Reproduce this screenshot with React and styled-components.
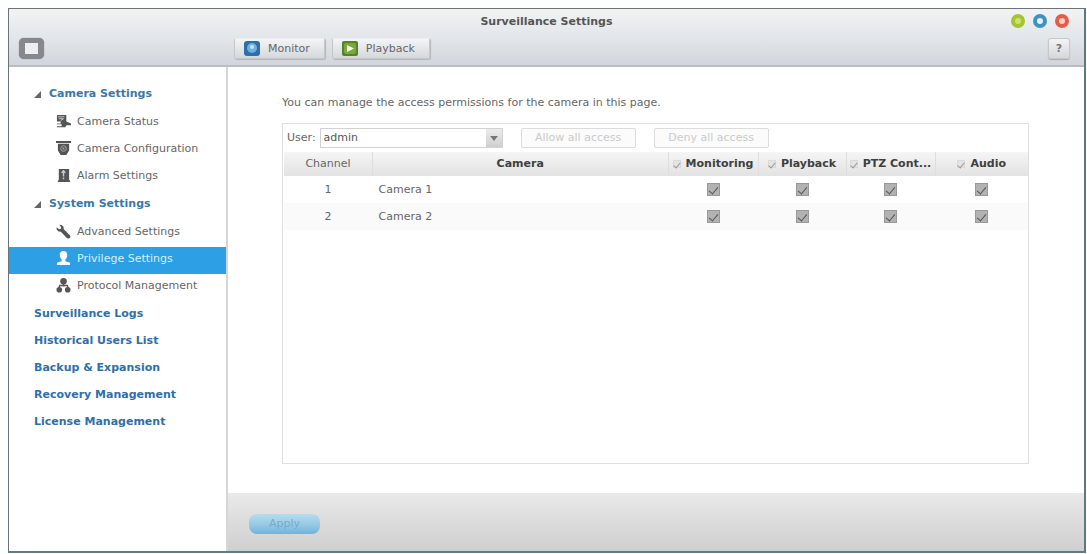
import React from 'react';
import styled, { createGlobalStyle } from 'styled-components';

const GlobalStyle = createGlobalStyle`
  * {
    box-sizing: border-box;
  }

  body {
    margin: 0;
    background: #fdfefe;
    color: #555;
    font: 11px/16px "DejaVu Sans", Verdana, sans-serif;
  }

  button, select, input {
    margin: 0;
    font: inherit;
    color: inherit;
  }
`;

const Page = styled.div`
  display: flex;
  flex-direction: column;
  min-height: 100vh;
  padding: 8px 1px 1px 8px;
`;

const Window = styled.div`
  flex: 1;
  display: flex;
  flex-direction: column;
  border: 1px solid #6b7379;
  border-right: 2px solid #5f7888;
  border-bottom: 2px solid #5c7c8d;
  background: #fff;
`;

const Header = styled.header`
  padding-bottom: 2px;
  border-bottom: 2px solid #bcbdbf;
  background: linear-gradient(#f1f3f3, #e3e6ea 50%, #d2d5db);
`;

const TitleBar = styled.div`
  display: grid;
  grid-template-columns: 1fr auto 1fr;
  align-items: center;
  height: 25px;
  padding: 0 15px;
`;

const Title = styled.h1`
  grid-column: 2;
  margin: 0;
  color: #555;
  font-size: 11px;
  font-weight: bold;
`;

const WindowControls = styled.div`
  display: flex;
  justify-content: flex-end;
  gap: 8px;
  padding-bottom: 2px;
`;

const Dot = styled.button`
  width: 14px;
  height: 14px;
  padding: 0;
  border: 4px solid ${props => props.$color};
  border-radius: 50%;
  background: ${props => props.$center};
`;

const Toolbar = styled.div`
  display: flex;
  align-items: center;
  gap: 7px;
  height: 29px;
  padding: 0 14px 0 10px;
`;

const MenuArea = styled.div`
  display: flex;
  width: 208px;
`;

const MenuButton = styled.button`
  width: 25px;
  height: 21px;
  padding: 0;
  border: 5px solid #85898f;
  border-left-width: 6px;
  border-right-width: 6px;
  border-radius: 5px;
  background: #eceef2;
  box-shadow: 0 0 1px #666a70;
`;

const ToolButton = styled.button`
  display: flex;
  align-items: center;
  gap: 8px;
  height: 21px;
  padding: 0 14px 0 9px;
  border: 1px solid #c3c7cb;
  border-top-color: #eceeef;
  border-radius: 2px;
  background: linear-gradient(#f3f4f5, #d5d9dd);
  color: #666;
  box-shadow: 1px 1px 1px #b4b7ba;

  svg {
    width: 16px;
    height: 15px;
  }
`;

const HelpButton = styled.button`
  width: 22px;
  height: 21px;
  margin-left: auto;
  padding: 0;
  border: 1px solid #c6c8cb;
  border-radius: 3px;
  background: linear-gradient(#f4f4f5, #d6d7d9);
  color: #777;
  font-weight: bold;
  box-shadow: 0 1px 1px #aaa;
`;

const Body = styled.div`
  flex: 1;
  display: flex;
`;

const Sidebar = styled.nav`
  flex: none;
  width: 219px;
  padding-top: 15px;
  border-right: 2px solid #d5d6d7;
`;

const Group = styled.section`
  padding-bottom: 1px;
`;

const GroupTitle = styled.h2`
  display: flex;
  align-items: center;
  gap: 8px;
  height: 28px;
  margin: 0;
  padding: 0 0 4px 25px;
  color: #3b78a8;
  font-size: 11px;
  font-weight: bold;

  svg {
    width: 7px;
    height: 7px;
  }
`;

const SubLink = styled.a`
  display: flex;
  align-items: center;
  gap: 6px;
  height: 27px;
  padding: 0 0 4px 47px;
  background: ${props => props.$active ? '#2c9fe5' : 'none'};
  color: ${props => props.$active ? '#d9efff' : '#666'};
  text-decoration: none;
  white-space: nowrap;

  svg {
    flex: none;
    width: 15px;
    height: 15px;
    color: ${props => props.$active ? '#fff' : '#555'};
  }
`;

const TopLink = styled.a`
  display: flex;
  align-items: center;
  height: 27px;
  padding: 0 0 4px 25px;
  color: #2f6fa8;
  font-weight: bold;
  text-decoration: none;
`;

const Main = styled.main`
  flex: 1;
  min-width: 0;
  display: flex;
  flex-direction: column;
`;

const Content = styled.div`
  flex: 1;
  display: flex;
  flex-direction: column;
  gap: 12px;
  padding: 28px 55px 29px 54px;
`;

const Intro = styled.p`
  margin: 0;
  color: #666;
`;

const Panel = styled.div`
  flex: 1;
  border: 1px solid #dfdfdf;
`;

const Filter = styled.div`
  display: flex;
  align-items: center;
  height: 28px;
  padding-left: 4px;
  color: #666;
`;

const SelectBox = styled.span`
  position: relative;
  width: 183px;
  height: 20px;
  margin: 0 18px 0 4px;
`;

const Select = styled.select`
  appearance: none;
  width: 100%;
  height: 20px;
  padding: 0 20px 0 3px;
  border: 1px solid #d2d2d2;
  border-radius: 0;
  background: #fff;
  color: #555;
`;

const Arrow = styled.svg`
  position: absolute;
  top: 1px;
  right: 1px;
  width: 16px;
  height: 18px;
  background: linear-gradient(#ececec, #cfcfcf);
  pointer-events: none;
`;

const AccessButton = styled.button`
  min-width: 115px;
  height: 20px;
  margin-right: 18px;
  padding: 0;
  border: 1px solid #dcdcdc;
  border-radius: 2px;
  background: #fbfbfb;
  color: #cacaca;
`;

const Table = styled.table`
  width: 100%;
  table-layout: fixed;
  border-collapse: collapse;
`;

const HeadCell = styled.th`
  width: ${props => props.$width || 'auto'};
  height: 24px;
  padding: 0;
  border-left: 1px solid ${props => props.$first ? 'transparent' : '#dedede'};
  background: linear-gradient(#f5f5f5, #e2e2e2);
  color: ${props => props.$plain ? '#666' : '#3f3f3f'};
  font-weight: ${props => props.$plain ? 'normal' : 'bold'};
  text-align: center;
`;

const CheckLabel = styled.label`
  display: flex;
  align-items: center;
  justify-content: center;
  gap: 5px;
  white-space: nowrap;
`;

const Row = styled.tr`
  background: ${props => props.$odd ? '#fafafa' : '#fff'};
`;

const Cell = styled.td`
  height: 27px;
  padding: 0 0 0 ${props => props.$left ? '6px' : '0'};
  color: #666;
  text-align: ${props => props.$left ? 'left' : 'center'};
`;

const Check = styled.input`
  appearance: none;
  flex: none;
  display: inline-grid;
  place-items: center;
  width: ${props => props.$small ? '8px' : '13px'};
  height: ${props => props.$small ? '8px' : '13px'};
  border: 1px solid ${props => props.$small ? '#dadada' : '#999'};
  background: ${props => props.$small ? '#e4e4e4' : '#b2b2b2'};
  vertical-align: middle;

  &:checked::after {
    content: '';
    width: ${props => props.$small ? '3px' : '4px'};
    height: ${props => props.$small ? '6px' : '8px'};
    border: solid ${props => props.$small ? '#999' : '#555'};
    border-width: 0 1px 1px 0;
    transform: rotate(40deg);
  }
`;

const Footer = styled.footer`
  display: flex;
  align-items: center;
  height: 58px;
  padding: 4px 21px 0;
  background: linear-gradient(#e9e9e9, #cfcfcf);
`;

const Apply = styled.button`
  width: 71px;
  height: 20px;
  padding: 0;
  border: 0;
  border-radius: 8px;
  background: linear-gradient(#b5dcee, #98cbe6 50%, #74b2d8);
  color: #7ba9cc;
`;

const Icon = ({ children }) => (
  <svg viewBox="0 0 16 16" fill="currentColor" aria-hidden="true">{children}</svg>
);

const StatusIcon = () => (
  <Icon>
    <path d="M1 1h10v7l5 2v2h-5l-1 2H1v-1h5v-2H1v-1h4v-2H1z" />
    <path d="M2 3h7M3 5h5l-3 2" fill="none" stroke="#ccc" />
  </Icon>
);

const DomeIcon = () => (
  <Icon>
    <path d="M0 0h16v2H0zM2 3h12v7l-3 5H5l-3-5z" />
    <circle cx="8" cy="8" r="3" fill="none" stroke="#aaa" />
    <path d="M7 7h2v2H7z" fill="#aaa" />
  </Icon>
);

const AlarmIcon = () => (
  <Icon>
    <path d="M3 1h11v12h1v2H2v-2h1z" />
    <path d="M8 3v6M6 5l2-2 2 2M8 10v2" fill="none" stroke="#ccc" strokeWidth="1.5" />
  </Icon>
);

const WrenchIcon = () => (
  <Icon>
    <path d="M3.5.8 6 1l2 2 .3 2.5 7 7-.1 2-1.4 1-2-.2-6.600-7L2.800 8 .8 6 .5 3.500l2.700 2 1.900-.3.4-1.800z" />
  </Icon>
);

const UserIcon = () => (
  <Icon>
    <path d="M8 0c2.8 0 4 2 4 4.3 0 2-.8 3.4-2 4.5V11l5 1.500V15H1v-2.500L6 11V8.800C4.800 7.700 4 6.300 4 4.300 4 2 5.200 0 8 0z" />
  </Icon>
);

const NetworkIcon = () => (
  <Icon>
    <circle cx="8" cy="3.5" r="3.5" />
    <circle cx="3.5" cy="12.5" r="3" />
    <circle cx="12.5" cy="12.5" r="3" />
    <path d="M8 5v4M3 11l1-3h8l1 3" fill="none" stroke="currentColor" strokeWidth="1.5" />
  </Icon>
);

const groups = [
  {
    title: 'Camera Settings',
    items: [
      { name: 'Camera Status', icon: <StatusIcon /> },
      { name: 'Camera Configuration', icon: <DomeIcon /> },
      { name: 'Alarm Settings', icon: <AlarmIcon /> },
    ],
  },
  {
    title: 'System Settings',
    items: [
      { name: 'Advanced Settings', icon: <WrenchIcon /> },
      { name: 'Privilege Settings', icon: <UserIcon /> },
      { name: 'Protocol Management', icon: <NetworkIcon /> },
    ],
  },
];

const links = [
  'Surveillance Logs',
  'Historical Users List',
  'Backup & Expansion',
  'Recovery Management',
  'License Management',
];

const permissions = [
  { name: 'Monitoring', width: '90px' },
  { name: 'Playback', width: '88px' },
  { name: 'PTZ Cont...', width: '89px' },
  { name: 'Audio', width: '93px' },
];

const cameras = ['Camera 1', 'Camera 2'];

class App extends React.Component {
  constructor(props) {
    super(props);
    this.state = {
      page: 'Privilege Settings',
      user: 'admin',
    };
  }

  renderSidebar() {
    const { page } = this.state;
    return (
      <Sidebar>
        {groups.map(group => (
          <Group key={group.title}>
            <GroupTitle>
              <svg viewBox="0 0 7 7" aria-hidden="true"><path d="M7 0v7H0z" fill="#666" /></svg>
              {group.title}
            </GroupTitle>
            {group.items.map(item => (
              <SubLink
                key={item.name}
                href="#"
                $active={item.name === page}
                onClick={() => this.setState({ page: item.name })}
              >
                {item.icon}
                {item.name}
              </SubLink>
            ))}
          </Group>
        ))}
        {links.map(link => <TopLink key={link} href="#">{link}</TopLink>)}
      </Sidebar>
    );
  }

  renderTable() {
    return (
      <Table>
        <thead>
          <tr>
            <HeadCell $width="89px" $plain $first>Channel</HeadCell>
            <HeadCell>Camera</HeadCell>
            {permissions.map(({ name, width }) => (
              <HeadCell key={name} $width={width}>
                <CheckLabel>
                  <Check type="checkbox" $small defaultChecked />
                  {name}
                </CheckLabel>
              </HeadCell>
            ))}
          </tr>
        </thead>
        <tbody>
          {cameras.map((camera, i) => (
            <Row key={camera} $odd={i % 2 === 1}>
              <Cell>{i + 1}</Cell>
              <Cell $left>{camera}</Cell>
              {permissions.map(({ name }) => (
                <Cell key={name}>
                  <Check type="checkbox" aria-label={`${name} ${camera}`} defaultChecked />
                </Cell>
              ))}
            </Row>
          ))}
        </tbody>
      </Table>
    );
  }

  render() {
    const { user } = this.state;
    return (
      <Page>
        <GlobalStyle />
        <Window>
          <Header>
            <TitleBar>
              <Title>Surveillance Settings</Title>
              <WindowControls>
                <Dot $color="#a5c52c" $center="#cfe07a" aria-label="Minimize" />
                <Dot $color="#3f93bd" $center="#e3f3fa" aria-label="Maximize" />
                <Dot $color="#e45c4c" $center="#f9cfc8" aria-label="Close" />
              </WindowControls>
            </TitleBar>
            <Toolbar>
              <MenuArea>
                <MenuButton aria-label="Toggle menu" />
              </MenuArea>
              <ToolButton>
                <svg viewBox="0 0 16 15" aria-hidden="true">
                  <rect width="16" height="15" rx="3" fill="#2f6ea8" />
                  <circle cx="8" cy="7" r="5" fill="#6db3e2" />
                  <circle cx="8" cy="6" r="2" fill="#c5e6f8" />
                </svg>
                Monitor
              </ToolButton>
              <ToolButton>
                <svg viewBox="0 0 16 15" aria-hidden="true">
                  <rect width="16" height="15" rx="2" fill="#57812a" />
                  <rect x="2" y="2" width="12" height="11" rx="2" fill="#7ba83a" />
                  <path d="M5 4l7 3.5L5 11z" fill="#f0f7dc" />
                </svg>
                Playback
              </ToolButton>
              <HelpButton>?</HelpButton>
            </Toolbar>
          </Header>
          <Body>
            {this.renderSidebar()}
            <Main>
              <Content>
                <Intro>You can manage the access permissions for the camera in this page.</Intro>
                <Panel>
                  <Filter>
                    <label htmlFor="user">User:</label>
                    <SelectBox>
                      <Select id="user" value={user} onChange={e => this.setState({ user: e.target.value })}>
                        <option>admin</option>
                      </Select>
                      <Arrow viewBox="0 0 16 18" aria-hidden="true">
                        <path d="M4 7h8l-4 5z" fill="#777" />
                      </Arrow>
                    </SelectBox>
                    <AccessButton disabled>Allow all access</AccessButton>
                    <AccessButton disabled>Deny all access</AccessButton>
                  </Filter>
                  {this.renderTable()}
                </Panel>
              </Content>
              <Footer>
                <Apply>Apply</Apply>
              </Footer>
            </Main>
          </Body>
        </Window>
      </Page>
    );
  }
}

export default App;
